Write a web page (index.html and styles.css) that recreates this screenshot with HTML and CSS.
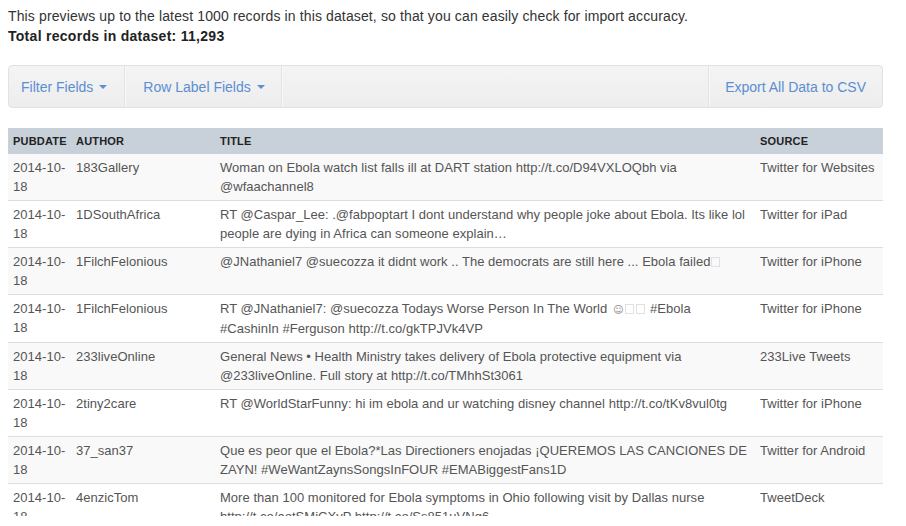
FILE: index.html
```html
<!DOCTYPE html>
<html>
<head>
<meta charset="utf-8">
<link rel="stylesheet" href="styles.css">
</head>
<body>
<div class="page">
  <p class="intro">This previews up to the latest 1000 records in this dataset, so that you can easily check for import accuracy.</p>
  <p class="total">Total records in dataset: 11,293</p>

  <nav class="navbar">
    <a class="nav-item first">Filter Fields <span class="caret"></span></a>
    <span class="divider"></span>
    <a class="nav-item">Row Label Fields <span class="caret"></span></a>
    <span class="divider"></span>
    <span class="spacer"></span>
    <span class="divider"></span>
    <a class="nav-item last">Export All Data to CSV</a>
  </nav>

  <div class="table-wrap">
    <table class="data">
      <colgroup>
        <col class="c-date"><col class="c-author"><col class="c-title"><col class="c-source">
      </colgroup>
      <thead>
        <tr><th>Pubdate</th><th>Author</th><th>Title</th><th>Source</th></tr>
      </thead>
      <tbody>
        <tr><td>2014-10-18</td><td>183Gallery</td><td>Woman on Ebola watch list falls ill at DART station http://t.co/D94VXLOQbh via @wfaachannel8</td><td>Twitter for Websites</td></tr>
        <tr><td>2014-10-18</td><td>1DSouthAfrica</td><td>RT @Caspar_Lee: .@fabpoptart I dont understand why people joke about Ebola. Its like lol people are dying in Africa can someone explain…</td><td>Twitter for iPad</td></tr>
        <tr><td>2014-10-18</td><td>1FilchFelonious</td><td>@JNathaniel7 @suecozza it didnt work .. The democrats are still here ... Ebola failed<span class="tofu"></span></td><td>Twitter for iPhone</td></tr>
        <tr><td>2014-10-18</td><td>1FilchFelonious</td><td>RT @JNathaniel7: @suecozza Todays Worse Person In The World <span class="smile">☺</span><span class="tofu"></span><span class="tofu"></span> #Ebola #CashinIn #Ferguson http://t.co/gkTPJVk4VP</td><td>Twitter for iPhone</td></tr>
        <tr><td>2014-10-18</td><td>233liveOnline</td><td>General News • Health Ministry takes delivery of Ebola protective equipment via @233liveOnline. Full story at http://t.co/TMhhSt3061</td><td>233Live Tweets</td></tr>
        <tr><td>2014-10-18</td><td>2tiny2care</td><td>RT @WorldStarFunny: hi im ebola and ur watching disney channel http://t.co/tKv8vul0tg</td><td>Twitter for iPhone</td></tr>
        <tr><td>2014-10-18</td><td>37_san37</td><td>Que es peor que el Ebola?*Las Directioners enojadas ¡QUEREMOS LAS CANCIONES DE ZAYN! #WeWantZaynsSongsInFOUR #EMABiggestFans1D</td><td>Twitter for Android</td></tr>
        <tr><td>2014-10-18</td><td>4enzicTom</td><td>More than 100 monitored for Ebola symptoms in Ohio following visit by Dallas nurse http://t.co/aotSMiCXyP http://t.co/Ss851uVNg6</td><td>TweetDeck</td></tr>
      </tbody>
    </table>
  </div>
</div>
</body>
</html>
```

FILE: styles.css
```css
html, body {
  margin: 0;
  padding: 0;
  background: #fff;
}
body {
  font-family: "Liberation Sans", Arial, Helvetica, sans-serif;
  font-size: 14px;
  line-height: 20px;
  color: #333;
}
.page {
  width: 875px;
  padding: 6px 0 0 8px;
}
.intro, .total {
  margin: 0;
}
.intro {
  letter-spacing: 0.13px;
}
.total {
  font-weight: bold;
  color: #222;
  letter-spacing: 0.28px;
}
.navbar {
  margin-top: 19px;
  height: 41px;
  display: flex;
  align-items: stretch;
  border: 1px solid #e2e2e2;
  border-radius: 4px;
  background: linear-gradient(#f4f4f4, #ededed);
}
.nav-item {
  display: flex;
  align-items: center;
  padding: 0 16px 0 17px;
  color: #5b8ed2;
  white-space: nowrap;
  cursor: pointer;
}
.nav-item.first {
  padding-left: 12px;
  padding-right: 17px;
}
.nav-item.last {
  padding: 0 16px 0 15px;
}
.caret {
  display: inline-block;
  width: 0;
  height: 0;
  margin-left: 6px;
  border-top: 4px solid #5b8ed2;
  border-left: 4px solid transparent;
  border-right: 4px solid transparent;
}
.divider {
  width: 0;
  border-left: 1px solid #e3e3e3;
  border-right: 1px solid #f9f9f9;
}
.spacer {
  flex: 1;
}
.table-wrap {
  margin-top: 20px;
  height: 388px;
  overflow: hidden;
}
.data {
  width: 875px;
  table-layout: fixed;
  border-collapse: collapse;
  color: #555;
  font-size: 13px;
  letter-spacing: 0.03px;
}
.c-date { width: 63px; }
.c-author { width: 144px; }
.c-title { width: 540px; }
.c-source { width: 128px; }
.data th {
  background: #c8d1da;
  height: 26px;
  padding: 0 5px;
  text-align: left;
  font-size: 11px;
  font-weight: bold;
  text-transform: uppercase;
  letter-spacing: 0.2px;
  color: #222;
  vertical-align: middle;
}
.data td {
  padding: 4px 5px;
  line-height: 19px;
  vertical-align: top;
  border-top: 1px solid #ddd;
}
.data td:first-child {
  padding-right: 2px;
}
.data tbody tr:nth-child(1) td {
  border-top: 0;
}
.data tbody tr:nth-child(odd) {
  background: #f9f9f9;
}
.tofu {
  display: inline-block;
  width: 9px;
  height: 10px;
  margin: 0 1px;
  border: 1px solid #e0e0e0;
  box-sizing: border-box;
  vertical-align: -1px;
}
.smile {
  font-family: "DejaVu Sans", sans-serif;
  font-size: 10px;
  color: #888;
  margin: 0 1px 0 2px;
}
```
